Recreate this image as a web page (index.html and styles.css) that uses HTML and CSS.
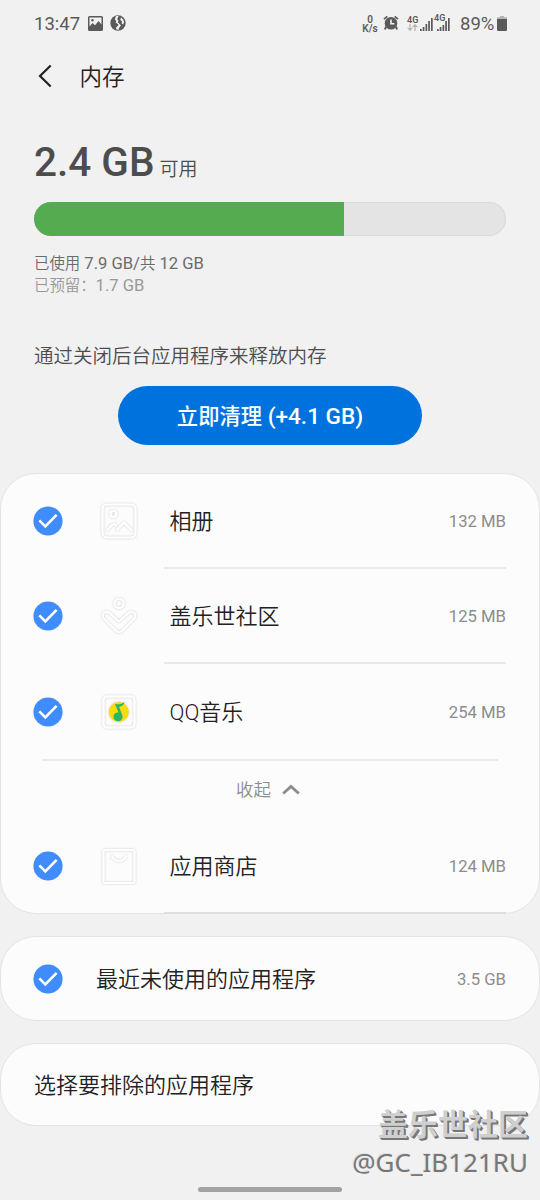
FILE: index.html
```html
<!DOCTYPE html>
<html lang="zh-CN">
<head>
<meta charset="utf-8">
<title>内存</title>
<link rel="stylesheet" href="styles.css">
</head>
<body>
<svg class="defs" width="0" height="0" aria-hidden="true">
  <symbol id="check" viewBox="0 0 30 30">
    <circle cx="15" cy="15" r="14.6" fill="#408cfc"/>
    <path d="M6.3 14.3l6 6L23.600 8.800" fill="none" stroke="#fff" stroke-width="2.6"/>
  </symbol>
</svg>
<div class="screen">
  <header class="status">
    <span class="clock">13:47</span>
    <svg class="st-img" width="15" height="15" viewBox="0 0 15 15"><path fill="#5a5a5a" fill-rule="evenodd" d="M1.500 0h12A1.500 1.500 0 0 1 15 1.500v12a1.500 1.500 0 0 1-1.500 1.500h-12A1.500 1.500 0 0 1 0 13.500v-12A1.500 1.500 0 0 1 1.500 0zM1.500 1.500v9l3-3.500 2.500 2.200 3.500-4.200 3 3.500v-7zM4.500 3a1.300 1.300 0 1 1 0 2.600 1.300 1.300 0 0 1 0-2.600z"/></svg>
    <svg class="st-globe" width="16" height="16" viewBox="0 0 16 16"><circle cx="8" cy="8" r="7.700" fill="#5a5a5a"/><path fill="#f1f1f1" d="M6 1L4.800 4.200 6.300 6 5.600 7.500l2.700 1.700-.3 1.500-2.200 2 .7 1.800 2.500.2-.3-1.200 2.200-3-1.500-1.700L7.800 7.300l.7-1.500L7.300 4.300 8.600 1zM11 2.300L10.300 5l1.700 1.600-.3 2.200 1.400.6 1-2.400-.8-2.300z"/></svg>
    <span class="spacer"></span>
    <span class="rate"><b>0</b><b>K/s</b></span>
    <svg class="st-alarm" width="16" height="16" viewBox="0 0 16 16"><path d="M1 4.200L4.300 1.300M15 4.200l-3.300-2.900" stroke="#5a5a5a" stroke-width="1.700"/><path d="M3 11.500L2 14.500M13 11.500l1 3" stroke="#5a5a5a" stroke-width="2"/><circle cx="8" cy="8.300" r="6.300" fill="#5a5a5a"/><path d="M8 4.500v4.300h3.300" fill="none" stroke="#f1f1f1" stroke-width="1.600"/></svg>
    <span class="net"><b>4G</b><svg width="11" height="7" viewBox="0 0 11 7"><path d="M3 0v6M.7 3.800L3 6.200l2.300-2.400M8 7V1M5.700 3.200L8 .8l2.300 2.400" fill="none" stroke="#b0b0b0" stroke-width="1.200"/></svg></span>
    <svg class="st-sig" width="13" height="13" viewBox="0 0 13 13"><path fill="#5a5a5a" d="M0 11h1.700v2H0zM2.700 9h1.700v4H2.700zM5.500 6h1.700v7H5.500zM8.200 3h1.700v10H8.200zM11 0h1.700v13H11z"/></svg>
    <span class="net two"><b>4G</b><svg width="13" height="13" viewBox="0 0 13 13"><path fill="#5a5a5a" d="M0 11h1.700v2H0zM2.700 9h1.700v4H2.700zM5.500 7h1.700v6H5.500zM8.200 3h1.700v10H8.200zM11 0h1.700v13H11z"/></svg></span>
    <span class="pct">89%</span>
    <svg class="st-bat" width="10" height="15" viewBox="0 0 10 15"><path fill="#b5b5b5" d="M3 0h4v1.200h3V4H0V1.200h3z"/><path fill="#5a5a5a" d="M0 3h10v11a1 1 0 0 1-1 1H1a1 1 0 0 1-1-1z"/></svg>
  </header>

  <nav class="bar">
    <svg width="14" height="24" viewBox="0 0 14 24"><path d="M12.700 1.500L2 12l10.700 10.500" fill="none" stroke="#222" stroke-width="2.200"/></svg>
    <h1>内存</h1>
  </nav>

  <section class="summary">
    <p class="free"><strong>2.4 GB</strong><span>可用</span></p>
    <div class="meter"><div class="fill" style="width:310px"></div></div>
    <p class="used"><span class="zh">已使用</span> 7.9 GB/<span class="zh">共</span> 12 GB</p>
    <p class="reserved"><span class="zh">已预留：</span>1.7 GB</p>
    <p class="hint">通过关闭后台应用程序来释放内存</p>
    <button class="clean" type="button"><span class="zh">立即清理</span> (+4.1 GB)</button>
  </section>

  <section class="card apps">
    <div class="row">
      <svg class="check"><use href="#check"/></svg>
      <svg class="icon" viewBox="0 0 40 40"><g fill="none" stroke="#fff" stroke-width="2.200" stroke-linejoin="round" stroke-linecap="round"><rect x="3.500" y="3.500" width="33" height="33" rx="4.500"/><circle cx="14.500" cy="13" r="3"/><path d="M8.500 29l4-4.500 2.500-1.500 2 1.500M18 29l7-7.500 7.500 7.500"/></g></svg>
      <span class="name">相册</span><span class="size">132 MB</span>
    </div>
    <hr>
    <div class="row mid">
      <svg class="check"><use href="#check"/></svg>
      <svg class="icon" viewBox="0 0 40 40"><g fill="none" stroke="#fff" stroke-width="2.200" stroke-linejoin="round"><circle cx="20" cy="7.500" r="4.700"/><path d="M20 25.500l-9.500-8.500a3.900 3.900 0 0 0-5.500 5.700l12.500 12.500a3.600 3.600 0 0 0 5 0L35 22.700a3.900 3.900 0 0 0-5.500-5.700z"/></g></svg>
      <span class="name">盖乐世社区</span><span class="size">125 MB</span>
    </div>
    <hr>
    <div class="row tall">
      <svg class="check"><use href="#check"/></svg>
      <svg class="icon" viewBox="0 0 40 40"><rect x="4.500" y="4.500" width="31" height="31" rx="3.500" fill="none" stroke="#fff" stroke-width="2.400"/><circle cx="19.800" cy="20" r="10" fill="#fadb0c"/><path fill="#27b567" d="M16 12c3.500.8 6.500.3 9.500-2-.5 3-2.500 4.300-5.400 4.700l3.400 9.300a4.600 4.400 0 1 1-4-3.500z"/></svg>
      <span class="name">QQ音乐</span><span class="size">254 MB</span>
    </div>
    <hr class="wide">
    <div class="collapse"><span>收起</span><svg width="18" height="11" viewBox="0 0 18 11"><path d="M1.200 9.500L9 2.500l7.800 7" fill="none" stroke="#8c8c8c" stroke-width="2.800"/></svg></div>
    <div class="row mid">
      <svg class="check"><use href="#check"/></svg>
      <svg class="icon" viewBox="0 0 40 40"><g fill="none" stroke="#fff" stroke-width="2.200" stroke-linejoin="round"><rect x="4.500" y="4" width="31" height="33" rx="2"/><path stroke-linecap="round" d="M13 10.500c3.500 6 10.500 6 14 0"/></g></svg>
      <span class="name">应用商店</span><span class="size">124 MB</span>
    </div>
    <hr class="last">
  </section>

  <section class="card recent">
    <svg class="check"><use href="#check"/></svg>
    <span class="name">最近未使用的应用程序</span><span class="size">3.5 GB</span>
  </section>

  <section class="card exclude"><span class="name">选择要排除的应用程序</span></section>

  <div class="home"></div>
  <div class="mark"><p class="m1">盖乐世社区</p><p class="m2">@GC_IB121RU</p></div>
</div>
</body>
</html>
```
FILE: styles.css
```css
* { box-sizing: border-box; }
body, p, h1 { margin: 0; }
body {
  background: #f1f1f1;
  color: #222;
  font-family: Roboto, "Noto Sans CJK SC", sans-serif;
}
svg { flex: none; display: block; }
.defs { position: absolute; }
.screen {
  position: relative;
  display: flex;
  flex-direction: column;
  width: 540px;
  height: 1200px;
  overflow: hidden;
}
.spacer { flex: 1; }

.status {
  display: flex;
  align-items: center;
  height: 46px;
  padding: 0 33px 0 34px;
  color: #5a5a5a;
}
.clock, .pct { font-size: 18.500px; line-height: 22px; padding-top: 2px; }
.clock { width: 54px; }
.st-globe { margin-left: 7px; }
.rate {
  display: flex;
  flex-direction: column;
  align-items: center;
  width: 18px;
  padding-top: 1px;
  font-size: 10px;
  line-height: 9px;
}
.rate b, .net b { font-weight: 600; }
.st-alarm { margin-left: 4px; margin-right: 1px; }
.net {
  display: flex;
  flex-direction: column;
  width: 12px;
  margin-left: 7px;
  font-size: 9px;
  line-height: 8px;
}
.st-sig { margin: 2px 0 0 1px; }
.two { position: relative; width: 16px; margin: 2px 0 0 1px; align-items: flex-end; }
.two b { position: absolute; left: 0; top: -3px; background: #f1f1f1; height: 7px; line-height: 7px; }
.pct { margin-left: 10px; width: 37px; }

.bar { display: flex; align-items: center; height: 60px; padding-left: 38px; }
.bar h1 { margin: 2px 0 0 27.500px; font-size: 22.500px; line-height: 30px; font-weight: 350; }

.summary {
  display: flex;
  flex-direction: column;
  height: 367px;
  padding: 29px 34px 0;
  color: #4d4d4d;
}
.free { display: flex; align-items: baseline; height: 67px; line-height: 54px; }
.free strong { font-size: 40.500px; font-weight: 500; }
.free span { margin-left: 5px; font-size: 19px; font-weight: 350; }
.meter {
  height: 34px;
  border-radius: 17px;
  background: #e4e4e4;
  overflow: hidden;
  box-shadow: inset 0 0 0 1px #dadada;
}
.fill { height: 100%; background: #55ab50; }
.used, .reserved { font-size: 16.600px; line-height: 22px; }
.used .zh, .reserved .zh { font-size: 15.400px; font-weight: 350; }
.used { margin-top: 17px; color: #6b6b6b; }
.reserved { color: #999; }
.hint { margin-top: 45px; font-size: 19.500px; line-height: 30px; font-weight: 350; }
.clean {
  align-self: center;
  width: 304px;
  height: 59px;
  margin-top: 14px;
  padding: 2px 0 0;
  border: 0;
  border-radius: 30px;
  background: #0072de;
  color: #fff;
  font: 500 22.600px/30px Roboto, "Noto Sans CJK SC", sans-serif;
}
.clean .zh { font-size: 21.300px; }

.card { flex: none; border: 1px solid #e4e4e4; border-radius: 36px; background: #fcfcfc; }
.apps { height: 441px; }
.row { display: flex; align-items: center; height: 93px; padding: 0 33px 0 32px; }
.row.tall { height: 95px; }
.row.mid .name, .row.mid .size { padding-top: 3px; }
.check { width: 30px; height: 30px; }
.icon {
  width: 40px;
  height: 40px;
  margin-left: 36px;
  filter: drop-shadow(.3px .5px .8px #ccc);
}
.name { padding-top: 2px; font-size: 22px; line-height: 30px; font-weight: 350; }
.row .name { margin-left: 30.500px; }
.size { margin-left: auto; padding-top: 2px; color: #8c8c8c; font-size: 16.700px; line-height: 24px; }
hr { height: 2px; margin: 0 33px 0 163px; border: 0; background: #e9e9e9; }
hr.wide { margin: 0 41px; }
hr.last { background: #dedede; }
.collapse {
  display: flex;
  align-items: center;
  height: 58px;
  padding-left: 235px;
  color: #8c8c8c;
  font-size: 17.500px;
  font-weight: 350;
  line-height: 24px;
}
.collapse svg { margin: -2px 0 0 11px; }

.recent { display: flex; align-items: center; height: 85px; margin-top: 22px; padding: 0 33px 0 32px; }
.recent .name { margin-left: 33px; }
.exclude { display: flex; align-items: center; height: 83px; margin-top: 22px; padding-left: 33px; }

.home {
  flex: none;
  align-self: center;
  width: 144px;
  height: 5px;
  margin-top: 61px;
  border-radius: 3px;
  background: #a2a2a2;
}
.mark { position: absolute; right: 12px; top: 1102px; text-align: right; white-space: nowrap; }
.m1 {
  font: 700 30px/40px "Noto Sans CJK SC", sans-serif;
  color: #cfcfcf;
  text-shadow: 1px 1px 0 #777, 2px 2px 0 #777;
}
.m2 {
  font: 400 26px/40px "Noto Sans", sans-serif;
  color: #777;
  text-shadow: -1px -1px 0 #e0e0e0;
}
```
